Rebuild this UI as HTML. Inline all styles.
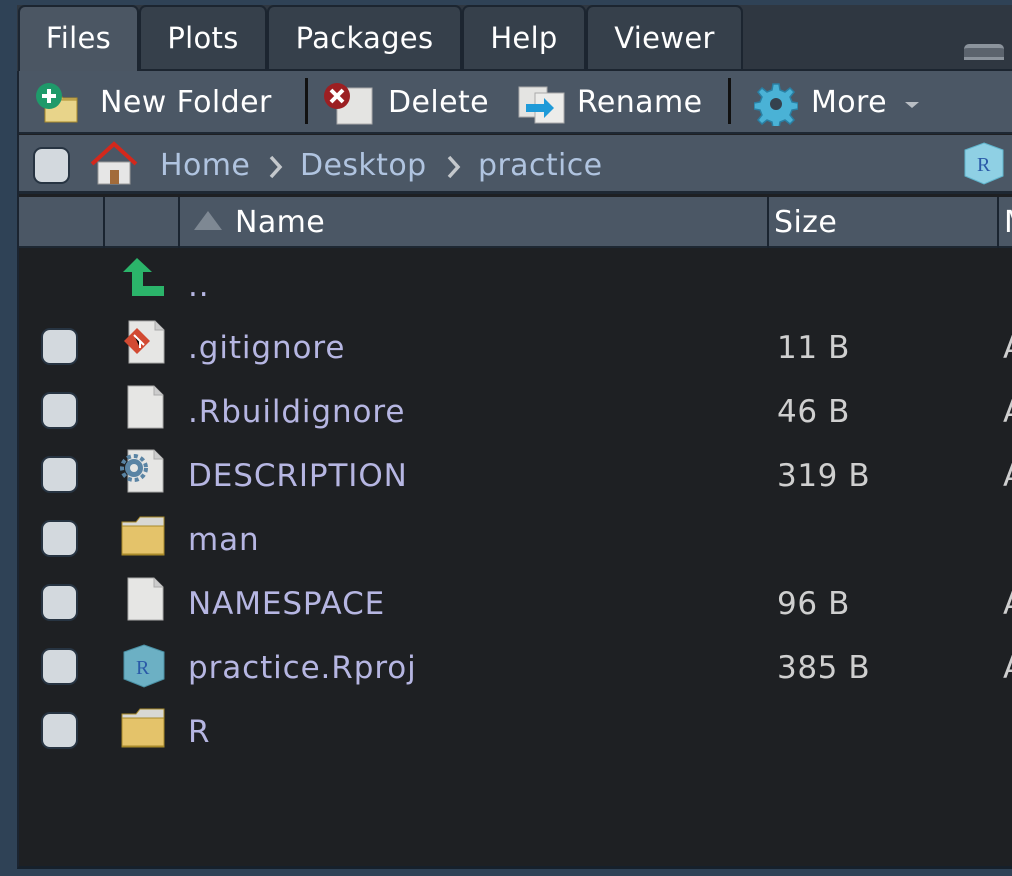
<!DOCTYPE html>
<html><head><meta charset="utf-8"><style>
*{margin:0;padding:0;box-sizing:border-box}
body{width:1012px;height:876px;background:#2f4256;position:relative;overflow:hidden;font-family:"DejaVu Sans","Liberation Sans",sans-serif}
.a{position:absolute}
.tab{position:absolute;top:5px;height:66px;background:#36404b;border:2px solid #1c2530;border-bottom:none;border-radius:7px 7px 0 0;color:#fff;font-size:29px;text-align:center;line-height:62px;letter-spacing:0.3px}
.t{position:absolute;font-size:30px;white-space:nowrap;letter-spacing:0.4px}
.cb{position:absolute;left:41px;width:37px;height:37px;background:#d3d9de;border:2px solid #273442;border-radius:9px}
.nm{position:absolute;left:188px;color:#b6b6e2;font-size:31px;white-space:nowrap;letter-spacing:0.9px}
.sz{position:absolute;left:777px;color:#cfcfcf;font-size:31px;white-space:nowrap;letter-spacing:0.6px}
.dc{position:absolute;left:1003px;color:#cfcfcf;font-size:31px}
</style></head><body>
<div class="a" style="left:17px;top:5px;width:1000px;height:864px;background:#1e2023;border-left:2px solid #1b2430;border-bottom:3px solid #16202b"></div>
<div class="a" style="left:17px;top:5px;width:995px;height:66px;background:#2f3741"></div>
<div class="tab" style="left:18px;width:121px;background:#4b5663;height:68px;border-bottom:none">Files</div>
<div class="tab" style="left:139px;width:128px">Plots</div>
<div class="tab" style="left:267px;width:195px">Packages</div>
<div class="tab" style="left:462px;width:124px">Help</div>
<div class="tab" style="left:586px;width:157px">Viewer</div>
<div class="a" style="left:964px;top:44px;width:40px;height:16px;border-top:4px solid #8b939c;background:#5b636d;border-radius:5px 5px 0 0;border-bottom:3px solid #8b939c"></div>
<div class="a" style="left:139px;top:69px;width:873px;height:2px;background:#1c2530"></div>
<!-- toolbar -->
<div class="a" style="left:19px;top:71px;width:993px;height:63px;background:#4b5765;border-bottom:2px solid #1e2833"></div>
<svg class="a" style="left:35px;top:82px" width="55" height="42"><path d="M10 12h14l4 4h14v24H10z" fill="#d4bb6a" stroke="#a88a2a"/><rect x="10" y="18" width="32" height="22" fill="#e8d48a" stroke="#a88a2a"/><circle cx="14" cy="14" r="13" fill="#1f9a6a"/><path d="M14 7v14M7 14h14" stroke="#fff" stroke-width="4"/></svg>
<div class="t" style="left:100px;top:85px;color:#fff">New Folder</div>
<div class="a" style="left:305px;top:78px;width:3px;height:46px;background:#111"></div>
<svg class="a" style="left:322px;top:82px" width="52" height="44"><rect x="15" y="6" width="35" height="36" fill="#e4e4e2" stroke="#aaa"/><circle cx="15" cy="14" r="13" fill="#9c1f22"/><path d="M9 8l12 12M21 8L9 20" stroke="#fff" stroke-width="4"/></svg>
<div class="t" style="left:388px;top:85px;color:#fff">Delete</div>
<svg class="a" style="left:518px;top:84px" width="48" height="40"><rect x="1" y="3" width="28" height="30" fill="#e4e4e2" stroke="#aaa"/><rect x="17" y="9" width="29" height="30" fill="#ececea" stroke="#aaa"/><path d="M8 20h18v-6l10 10-10 10v-6H8z" fill="#1e9ad8"/></svg>
<div class="t" style="left:577px;top:85px;color:#fff">Rename</div>
<div class="a" style="left:728px;top:78px;width:3px;height:46px;background:#111"></div>
<svg class="a" style="left:754px;top:82px" width="44" height="44" viewBox="0 0 44 44"><g fill="#4ab2d6" stroke="#2a7fa3" stroke-width="1.5"><path d="M19 2h6l1 6 5 2 5-4 4 4-4 5 2 5 6 1v6l-6 1-2 5 4 5-4 4-5-4-5 2-1 6h-6l-1-6-5-2-5 4-4-4 4-5-2-5-6-1v-6l6-1 2-5-4-5 4-4 5 4 5-2z"/></g><circle cx="22" cy="22" r="6" fill="#35414e"/></svg>
<div class="t" style="left:811px;top:85px;color:#fff">More</div>
<div class="a" style="left:905px;top:102px;border-left:7px solid transparent;border-right:7px solid transparent;border-top:6px solid #b9bec4"></div>
<!-- breadcrumb -->
<div class="a" style="left:19px;top:135px;width:993px;height:59px;background:#4b5765;border-bottom:3px solid #1e2833"></div>
<div class="cb" style="left:33px;top:147px;width:37px;height:37px"></div>
<svg class="a" style="left:89px;top:140px" width="50" height="46"><path d="M9 22h32v22H9z" fill="#e6e6e6" stroke="#999"/><rect x="21" y="30" width="9" height="14" fill="#a26b3a"/><path d="M3 24L25 4l22 20" fill="none" stroke="#d3281c" stroke-width="4"/></svg>
<div class="t" style="left:160px;top:148px;color:#b0c4e0">Home</div>
<svg class="a" style="left:268px;top:154px" width="16" height="26"><path d="M3 3l9 10-9 10" fill="none" stroke="#c4c8cc" stroke-width="3.5"/></svg>
<div class="t" style="left:300px;top:148px;color:#b0c4e0">Desktop</div>
<svg class="a" style="left:446px;top:154px" width="16" height="26"><path d="M3 3l9 10-9 10" fill="none" stroke="#c4c8cc" stroke-width="3.5"/></svg>
<div class="t" style="left:478px;top:148px;color:#b0c4e0">practice</div>
<svg class="a" style="left:962px;top:141px" width="44" height="44"><path d="M22 2l19 7v26l-19 8-19-8V9z" fill="#8fd0e4" stroke="#5fb4cc"/><text x="15" y="30" font-family="Liberation Serif" font-size="20" fill="#2a5aa8">R</text></svg>
<!-- header -->
<div class="a" style="left:19px;top:197px;width:993px;height:51px;background:#4b5765;border-bottom:2px solid #1e2833"></div>
<div class="a" style="left:103px;top:197px;width:2px;height:51px;background:#1a2430"></div>
<div class="a" style="left:178px;top:197px;width:2px;height:51px;background:#1a2430"></div>
<div class="a" style="left:767px;top:197px;width:2px;height:51px;background:#1a2430"></div>
<div class="a" style="left:997px;top:197px;width:2px;height:51px;background:#1a2430"></div>
<div class="a" style="left:194px;top:211px;border-left:14px solid transparent;border-right:14px solid transparent;border-bottom:19px solid #7e8893"></div>
<div class="t" style="left:235px;top:205px;color:#fff">Name</div>
<div class="t" style="left:774px;top:205px;color:#fff">Size</div>
<div class="t" style="left:1004px;top:205px;color:#fff">M</div>
<!-- rows -->
<svg class="a" style="left:123px;top:258px" width="42" height="40"><path d="M14 0L0 14h9v24h32v-10H20V14h9z" fill="#2bb46a"/></svg>
<div class="nm" style="top:268px">..</div>

<div class="cb" style="top:328px"></div>
<svg class="a" style="left:120px;top:320px" width="46" height="44"><path d="M9 1h26l9 9v33H9z" fill="#e6e6e4" stroke="#aaa"/><path d="M35 1v9h9" fill="#ccc" stroke="#aaa"/><path d="M17 8l13 13-13 13L4 21z" fill="#d24a32"/><path d="M14 15l6 6v7M20 21l4 4" stroke="#fff" stroke-width="2"/></svg>
<div class="nm" style="top:330px">.gitignore</div><div class="sz" style="top:330px">11 B</div><div class="dc" style="top:330px">A</div>

<div class="cb" style="top:392px"></div>
<svg class="a" style="left:127px;top:385px" width="40" height="44"><path d="M1 1h26l9 9v33H1z" fill="#e6e6e4" stroke="#aaa"/><path d="M27 1v9h9" fill="#ccc" stroke="#aaa"/></svg>
<div class="nm" style="top:394px">.Rbuildignore</div><div class="sz" style="top:394px">46 B</div><div class="dc" style="top:394px">A</div>

<div class="cb" style="top:456px"></div>
<svg class="a" style="left:120px;top:449px" width="46" height="44"><path d="M8 1h26l9 9v33H8z" fill="#e6e6e4" stroke="#aaa"/><path d="M34 1v9h9" fill="#ccc" stroke="#aaa"/><circle cx="14" cy="19" r="9" fill="#5a84a4"/><circle cx="14" cy="19" r="12" fill="none" stroke="#5a84a4" stroke-width="4" stroke-dasharray="4 3"/><circle cx="14" cy="19" r="4" fill="#e6e6e4"/></svg>
<div class="nm" style="top:458px">DESCRIPTION</div><div class="sz" style="top:458px">319 B</div><div class="dc" style="top:458px">A</div>

<div class="cb" style="top:520px"></div>
<svg class="a" style="left:120px;top:514px" width="46" height="42"><path d="M2 8h14l4-5h24v38H2z" fill="#d8d8d4" stroke="#a88a2a"/><rect x="2" y="12" width="42" height="28" fill="#e4c36a" stroke="#a88a2a"/></svg>
<div class="nm" style="top:522px">man</div>

<div class="cb" style="top:584px"></div>
<svg class="a" style="left:127px;top:577px" width="40" height="44"><path d="M1 1h26l9 9v33H1z" fill="#e6e6e4" stroke="#aaa"/><path d="M27 1v9h9" fill="#ccc" stroke="#aaa"/></svg>
<div class="nm" style="top:586px">NAMESPACE</div><div class="sz" style="top:586px">96 B</div><div class="dc" style="top:586px">A</div>

<div class="cb" style="top:648px"></div>
<svg class="a" style="left:121px;top:643px" width="46" height="46"><path d="M23 2l20 7v27l-20 8-20-8V9z" fill="#6cb0c4" stroke="#4a90a4"/><text x="15" y="31" font-family="Liberation Serif" font-size="20" fill="#2a5aa8">R</text></svg>
<div class="nm" style="top:650px">practice.Rproj</div><div class="sz" style="top:650px">385 B</div><div class="dc" style="top:650px">A</div>

<div class="cb" style="top:712px"></div>
<svg class="a" style="left:120px;top:706px" width="46" height="42"><path d="M2 8h14l4-5h24v38H2z" fill="#d8d8d4" stroke="#a88a2a"/><rect x="2" y="12" width="42" height="28" fill="#e4c36a" stroke="#a88a2a"/></svg>
<div class="nm" style="top:714px">R</div>
</body></html>
